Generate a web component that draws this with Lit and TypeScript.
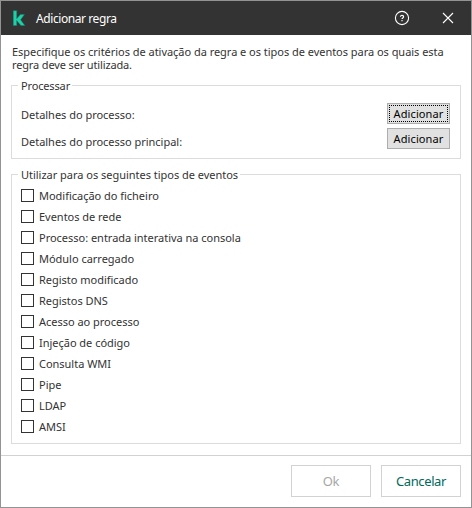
import { LitElement, html, css } from "lit";
import { customElement } from "lit/decorators.js";

const EVENT_TYPES = [
  "Modificação do ficheiro",
  "Eventos de rede",
  "Processo: entrada interativa na consola",
  "Módulo carregado",
  "Registo modificado",
  "Registos DNS",
  "Acesso ao processo",
  "Injeção de código",
  "Consulta WMI",
  "Pipe",
  "LDAP",
  "AMSI",
];

@customElement("app-root")
export class AppRoot extends LitElement {
  static styles = css`
    :host {
      display: flex;
      flex-direction: column;
      box-sizing: border-box;
      width: 472px;
      height: 508px;
      border: 1px solid #939393;
      background: #fff;
      color: #333;
      font: 11px/13px "Noto Sans", "Open Sans", sans-serif;
      letter-spacing: -0.02px;
      white-space: nowrap;
      overflow: hidden;
    }
    header {
      display: flex;
      align-items: center;
      box-sizing: border-box;
      height: 34px;
      padding: 0 17px 0 12px;
      background: #333;
      color: #fff;
    }
    .logo { width: 13px; height: 16px; margin-right: 10px; }
    .title { flex: 1; font-size: 12px; letter-spacing: -0.42px; }
    .help { width: 16px; height: 16px; margin-right: 32px; }
    .close { width: 12px; height: 12px; }
    main {
      display: flex;
      flex-direction: column;
      height: 420px;
      padding: 10px 10px 0;
      box-sizing: border-box;
    }
    .intro { margin: 0 0 7px 1px; height: 26px; letter-spacing: -0.03px; }
    .intro span { display: block; height: 13px; }
    .intro span + span { letter-spacing: -0.14px; }
    fieldset {
      box-sizing: border-box;
      min-width: 0;
      margin: 0;
      padding: 0;
      border: 1px solid #dcdcdc;
    }
    legend { margin-left: 6px; padding: 0 2px 0 3px; line-height: 15px; height: 15px; }
    .process { height: 81px; margin-bottom: 8px; }
    .process legend { letter-spacing: -0.15px; }
    .events { height: 277px; }
    .rows { display: flex; flex-direction: column; gap: 4px; padding: 10px 9px 0; }
    .row { display: flex; justify-content: space-between; height: 21px; line-height: 23px; }
    .row.second { line-height: 27px; }
    button { box-sizing: border-box; margin: 0; font: inherit; letter-spacing: inherit; }
    .add {
      width: 63px;
      height: 21px;
      margin-right: 1px;
      padding: 1px;
      border: 1px solid #adadad;
      background: #e1e1e1;
      color: #000;
      line-height: 15px;
      letter-spacing: 0.1px;
    }
    .add span { display: block; height: 17px; box-sizing: border-box; border: 1px solid transparent; }
    .add.focused span { border: 1px dotted #000; }
    .list { display: flex; flex-direction: column; gap: 8px; padding: 7px 9px 0; }
    .check { display: flex; align-items: center; gap: 5px; height: 13px; }
    .box { width: 13px; height: 13px; box-sizing: border-box; border: 1px solid #333; background: #fff; }
    footer {
      display: flex;
      flex: 1;
      justify-content: flex-end;
      align-items: flex-start;
      gap: 10px;
      padding: 9px 10px 0;
      border-top: 1px solid #d2d2d2;
    }
    .action {
      width: 80px;
      height: 32px;
      padding: 0;
      border: 1px solid #d2d2d2;
      background: #fff;
      color: #00695c;
      font-size: 13px;
      letter-spacing: -0.4px;
    }
    .action.disabled { color: #a6a6a6; }
  `;

  render() {
    return html`
      <header>
        <svg class="logo" viewBox="0 0 13 16">
          <path
            fill="#1fcfaa"
            stroke="#14806a"
            stroke-width="0.5"
            d="M0.3 0.7h3.4v8L7.4 4.6h4L7.6 9.8l4.2 5.7H7.9L3.7 10.4v5.1H0.3z"
          />
        </svg>
        <span class="title">Adicionar regra</span>
        <svg class="help" viewBox="0 0 16 16" fill="none" stroke="#fff">
          <circle cx="8" cy="8" r="6.6" stroke-width="1.1" />
          <path stroke-width="1.2" d="M6.5 6.7c0-1.9 3.1-1.8 3.1.1 0 1.1-1.6 1.1-1.6 2.3M8 10v1.2" />
        </svg>
        <svg class="close" viewBox="0 0 12 12" fill="none" stroke="#fff" stroke-width="1.1">
          <path d="M1 1l10 10M11 1L1 11" />
        </svg>
      </header>
      <main>
        <div class="intro">
          <span>Especifique os critérios de ativação da regra e os tipos de eventos para os quais esta</span>
          <span>regra deve ser utilizada.</span>
        </div>
        <fieldset class="process">
          <legend>Processar</legend>
          <div class="rows">
            <div class="row">
              <span>Detalhes do processo:</span>
              <button class="add focused"><span>Adicionar</span></button>
            </div>
            <div class="row second">
              <span>Detalhes do processo principal:</span>
              <button class="add"><span>Adicionar</span></button>
            </div>
          </div>
        </fieldset>
        <fieldset class="events">
          <legend>Utilizar para os seguintes tipos de eventos</legend>
          <div class="list">
            ${EVENT_TYPES.map(
              (name) => html`<label class="check"><span class="box"></span><span>${name}</span></label>`
            )}
          </div>
        </fieldset>
      </main>
      <footer>
        <button class="action disabled">Ok</button>
        <button class="action">Cancelar</button>
      </footer>
    `;
  }
}
